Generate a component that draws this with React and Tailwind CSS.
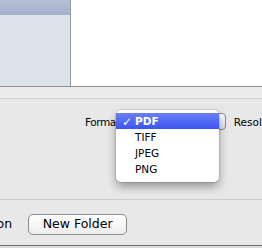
export default function App() {
  const font = { fontFamily: '"Lucida Grande", "DejaVu Sans", sans-serif' };
  return (
    <div className="relative w-[262px] h-[248px] overflow-hidden bg-[#e8e8e8] text-black" style={font}>
      {/* top browser area */}
      <div className="flex h-[86px]">
        <div className="flex w-[70px] flex-col bg-[#dde3ea]">
          <div className="h-[15px] bg-gradient-to-b from-[#b4bfd5] to-[#a5b1cb]" />
          <div className="flex-1" />
        </div>
        <div className="w-px bg-[#9a9a9a]" />
        <div className="flex-1 bg-white" />
      </div>
      <div className="h-px bg-[#8f8f8f]" />
      <div className="h-[11px] bg-[#ececec]" />
      <div className="h-px bg-[#d4d4d4]" />
      {/* options area */}
      <div className="flex h-[100px] items-start pl-[85px] pt-[14px] text-[10.5px]">
        <div className="flex items-center whitespace-nowrap">
          <span className="leading-[16px] tracking-[-0.4px]">Format:</span>
          <div className="ml-[2px] h-[17px] w-[101px] shrink-0 rounded-[4px] border border-[#8a8a8a] bg-gradient-to-b from-white to-[#e2e2e2]" />
          <span className="ml-[8px] leading-[16px]">Resolution:</span>
        </div>
      </div>
      <div className="h-px bg-[#cdcdcd]" />
      {/* bottom bar */}
      <div className="flex h-[45px] items-center bg-[#e8e8e8] pt-[4px] text-[12.5px]">
        <span className="-ml-[72px] whitespace-nowrap">New Location</span>
        <button className="ml-[16px] flex h-[21px] w-[99px] shrink-0 items-center justify-center rounded-[5px] border border-[#8c8c8c] bg-gradient-to-b from-white to-[#ededed] text-[12.5px] text-black">
          New Folder
        </button>
      </div>
      <div className="h-px bg-[#6e6e6e]" />
      <div className="h-[3px] bg-[#dcdcdc]" />

      {/* popup menu */}
      <div className="absolute left-[116px] top-[110px] w-[103px] rounded-[5px] bg-white pt-[3px] pb-[5px] shadow-[0_5px_10px_rgba(0,0,0,0.35)] ring-1 ring-black/10 text-[10.5px]">
        <div className="flex h-[16px] items-center bg-gradient-to-b from-[#6a7ef6] to-[#3c55f1] pt-[1px] text-white">
          <span className="w-[19px] pl-[6px] text-[12px] font-bold leading-none">✓</span>
          <span className="font-bold">PDF</span>
        </div>
        <div className="flex h-[16px] items-center pl-[19px] pt-[1px]">TIFF</div>
        <div className="flex h-[16px] items-center pl-[19px] pt-[1px]">JPEG</div>
        <div className="flex h-[16px] items-center pl-[19px] pt-[1px]">PNG</div>
      </div>
    </div>
  );
}
